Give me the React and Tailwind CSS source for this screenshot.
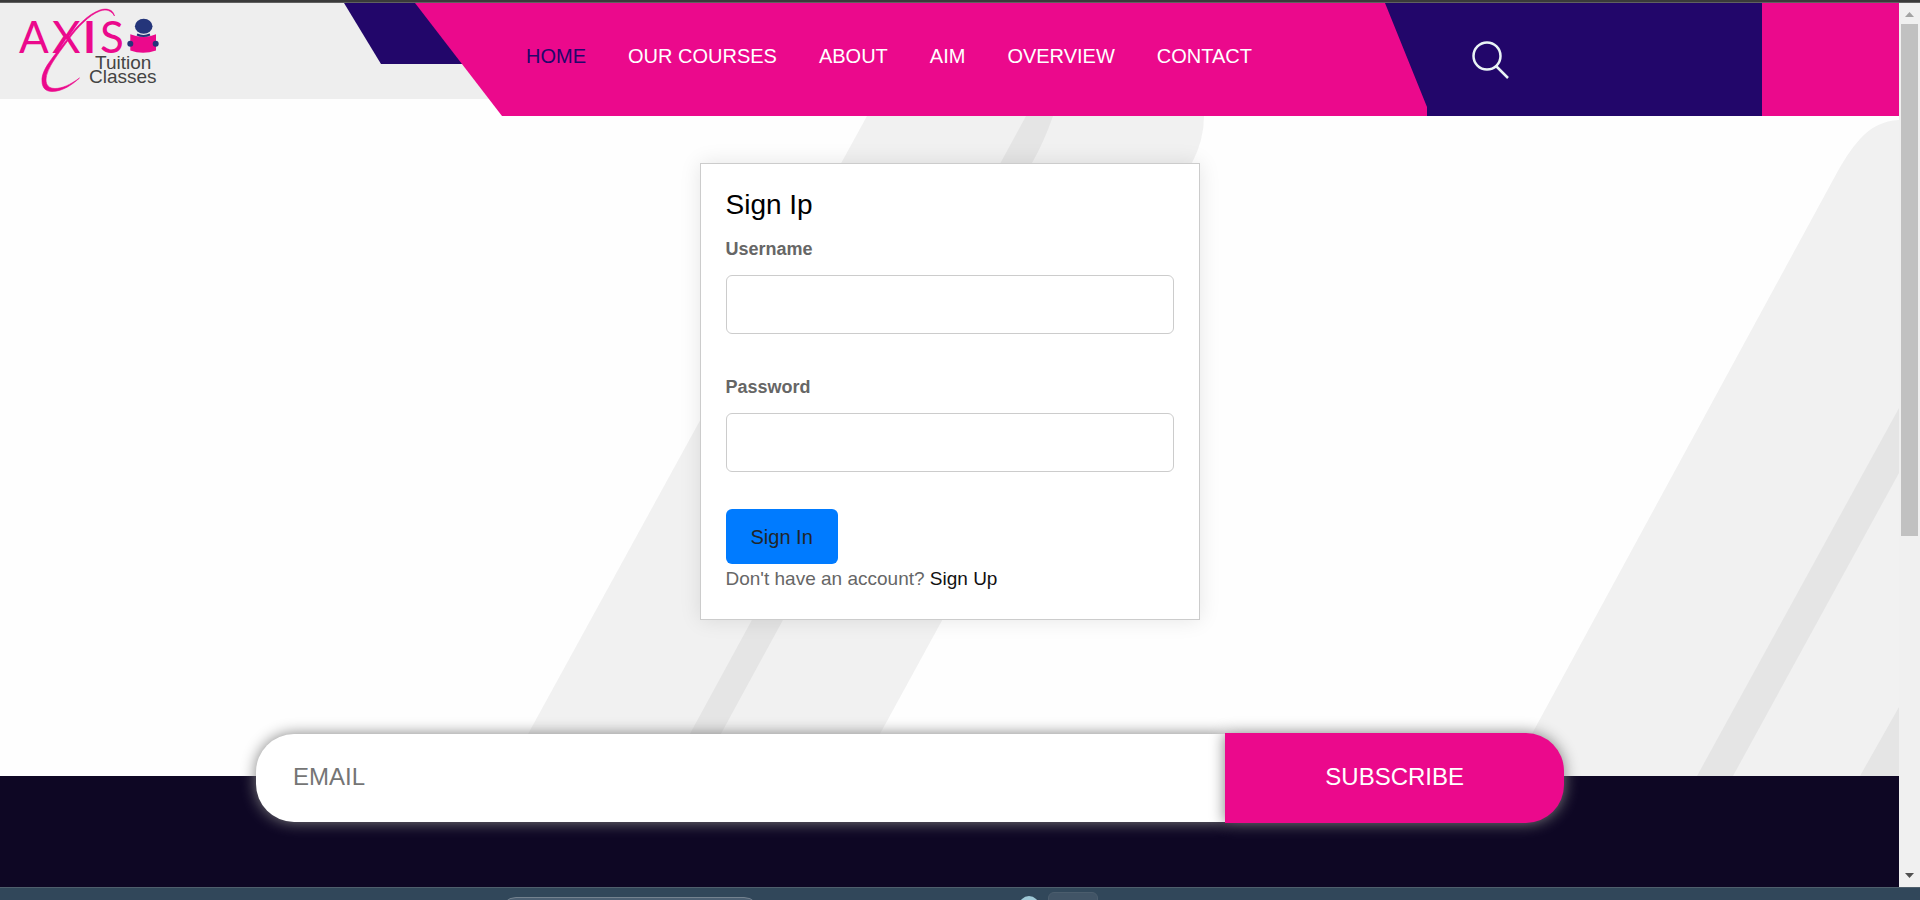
import { useState } from "react"

const navLinks = ["HOME", "OUR COURSES", "ABOUT", "AIM", "OVERVIEW", "CONTACT"]

const Logo = () => (
  <svg viewBox="0 0 148 88" className="w-[148px] h-[88px]" role="img" aria-label="Axis Tuition Classes">
    <g fill="#eb098c" fontFamily="Lato, sans-serif" fontSize="44">
      <text x="1" y="47">A</text>
      <text x="34" y="47">X</text>
      <text x="65" y="47" fontWeight="700">I</text>
      <text x="82" y="47">S</text>
    </g>
    <path
      d="M96.500 10C95 3 88 2 82 4C70 8 58 21 50 32C40 46 23 62 24 75C24 82 28 85.500 34 85.500C44 85.500 54 79 61.500 72C52 79 44 82.500 37 82.500C31 82.500 28 79 28 74C28 62 42 46 51 33C59 22 71 9 82 5C88 3 93 4 96.500 10Z"
      fill="#eb098c"
      stroke="#eb098c"
      strokeWidth="0.600"
    />
    <path d="M112.300 28.300Q119 31 125.500 31Q132 31 138 28.300V44.500Q125 49 112.300 44.500Z" fill="#eb098c" />
    <path d="M119 28.500Q125.500 31.500 132 28.500" fill="none" stroke="#24357a" strokeWidth="2" />
    <ellipse cx="125.700" cy="20.300" rx="8.800" ry="7.500" fill="#24357a" />
    <circle cx="112.300" cy="37.700" r="3" fill="#24357a" />
    <circle cx="137.700" cy="37.700" r="3" fill="#24357a" />
    <g fill="#444" fontFamily="Liberation Sans, Arial, sans-serif" fontSize="19">
      <text x="77" y="63">Tuition</text>
      <text x="71" y="77">Classes</text>
    </g>
  </svg>
)

const Header = () => (
  <header className="flex h-[113px]">
    <div className="flex justify-between w-[502px] h-24 bg-[#eee] shrink-0">
      <a href="#home" className="ml-[18px] mt-[3px]">
        <Logo />
      </a>
      <div className="w-[158px] h-[61px] bg-[#22066a] [clip-path:polygon(0_0,100%_0,100%_100%,37px_100%)]"></div>
    </div>

    <nav className="flex flex-1 items-center gap-[42px] -ml-[87px] pl-[111px] pb-2 bg-[#eb098c] text-xl text-white whitespace-nowrap [clip-path:polygon(0_0,100%_0,100%_100%,87px_100%)]">
      {navLinks.map((link, i) => (
        <a key={link} href="#home" className={i === 0 ? "text-[#22066a]" : "hover:text-[#22066a]"}>
          {link}
        </a>
      ))}
    </nav>

    <div className="w-[377px] -ml-[42px] pl-[87px] pt-[38px] shrink-0 bg-[#22066a] [clip-path:polygon(0_0,100%_0,100%_100%,42px_100%,42px_92%)]">
      <button type="button" aria-label="Search" className="block">
        <svg viewBox="0 0 38 38" className="w-[38px] h-[38px]" fill="none" stroke="#e9f3f5" strokeWidth="2.500">
          <ellipse cx="15" cy="15" rx="13.500" ry="13.500" />
          <path d="M24.500 25.500L36 37" />
        </svg>
      </button>
    </div>
    <div className="w-[137px] shrink-0 bg-[#eb098c]"></div>
  </header>
)

// diagonal bands behind the form
const Stripes = () => (
  <svg
    viewBox="0 116 1899 660"
    preserveAspectRatio="xMidYMin slice"
    className="absolute inset-0 w-full h-full"
    aria-hidden="true"
  >
    <path d="M867 116H1204Q1204 140 1192 163L857 776H505Z" fill="#f1f1f1" />
    <path d="M1026 116H1053Q1044 142 1032 163L698 776H667Z" fill="#e5e5e5" />
    <path d="M1899 120Q1876 121 1860 139Q1847 153 1833 180L1509 776H1899Z" fill="#f1f1f1" />
    <path d="M1899 408V473L1733 776H1697Z" fill="#e5e5e5" />
    <path d="M1899 707V776H1860Z" fill="#e5e5e5" />
  </svg>
)

const LoginForm = () => {
  const [username, setUsername] = useState("")
  const [password, setPassword] = useState("")

  const handleSubmit = (e) => {
    e.preventDefault()
  }

  const inputClass = "block w-full h-[59px] mt-3 px-4 bg-white border border-[#ccc] rounded-md text-lg text-black"

  return (
    <form
      onSubmit={handleSubmit}
      className="relative w-full max-w-[500px] p-[25px] bg-white border border-[#ccc] shadow-[0_0_20px_rgba(0,0,0,0.1)]"
    >
      <h2 className="text-[28px] leading-8 text-black">Sign Ip</h2>

      <div className="mt-[14px]">
        <label htmlFor="username" className="block text-lg leading-7 font-bold text-[#666]">
          Username
        </label>
        <input
          id="username"
          type="text"
          className={inputClass}
          value={username}
          onChange={(e) => setUsername(e.target.value)}
        />
      </div>

      <div className="mt-[39px]">
        <label htmlFor="password" className="block text-lg leading-7 font-bold text-[#666]">
          Password
        </label>
        <input
          id="password"
          type="password"
          className={inputClass}
          value={password}
          onChange={(e) => setPassword(e.target.value)}
        />
      </div>

      <button type="submit" className="block h-[55px] mt-[37px] px-[25px] rounded-md bg-[#007bff] text-xl text-[#212529]">
        Sign In
      </button>
      <p className="text-[19px] leading-[30px] text-[#666]">
        Don't have an account?{" "}
        <a href="#signup" className="text-[#111]">
          Sign Up
        </a>
      </p>
    </form>
  )
}

const Subscribe = () => (
  <form className="flex items-center -mt-[43px] ml-[256px] mr-[335px]" onSubmit={(e) => e.preventDefault()}>
    <input
      type="email"
      aria-label="Email"
      placeholder="EMAIL"
      className="flex-1 min-w-0 h-[88px] pl-[37px] pb-[2px] bg-white rounded-l-[38px] text-2xl text-black placeholder:text-[#757575] shadow-[0_0_15px_gray]"
    />
    <button
      type="submit"
      className="h-[90px] px-[100px] pb-[2px] bg-[#eb098c] rounded-r-[38px] text-2xl text-white shadow-[0_0_15px_gray]"
    >
      SUBSCRIBE
    </button>
  </form>
)

const Scrollbar = () => (
  <div className="flex flex-col items-center w-[21px] shrink-0 bg-[#f0f0f0]" aria-hidden="true">
    <svg viewBox="0 0 21 21" className="w-[21px] h-[21px] shrink-0">
      <path d="M10.500 9L15 14H6Z" fill="#a3a3a3" />
    </svg>
    <div className="w-[17px] h-[512px] bg-[#c1c1c1]"></div>
    <svg viewBox="0 0 21 21" className="w-[21px] h-[21px] mt-auto shrink-0">
      <path d="M6 7H15L10.500 12Z" fill="#505050" />
    </svg>
  </div>
)

const Taskbar = () => (
  <div className="relative h-[13px] overflow-hidden bg-[#31475a] border-t border-[#4f5f6c]">
    <div className="absolute left-[500px] top-[9px] w-[260px] h-8 rounded-full bg-[#4c6073] border border-[#74828f]"></div>
    <div className="absolute left-[1019px] top-2 w-5 h-5 rounded-full bg-[#9fc8d6]"></div>
    <div className="absolute left-[1048px] top-1 w-[50px] h-12 rounded-md bg-[#415466] border border-[#4b5d6d]"></div>
  </div>
)

const App = () => {
  return (
    <div className="flex flex-col min-h-screen font-['Liberation_Sans',Arial,sans-serif]">
      <div className="h-[3px] bg-[#3a3a3a] border-b border-[#606060]"></div>
      <div className="flex flex-1">
        <div className="flex flex-col flex-1 min-w-0 bg-[#fefefe]">
          <Header />
          <main className="relative flex justify-center pt-[47px] pb-[156px]">
            <Stripes />
            <LoginForm />
          </main>
          <footer className="relative flex-1 bg-[#0e0724]">
            <Subscribe />
          </footer>
        </div>
        <Scrollbar />
      </div>
      <Taskbar />
    </div>
  )
}

export default App
